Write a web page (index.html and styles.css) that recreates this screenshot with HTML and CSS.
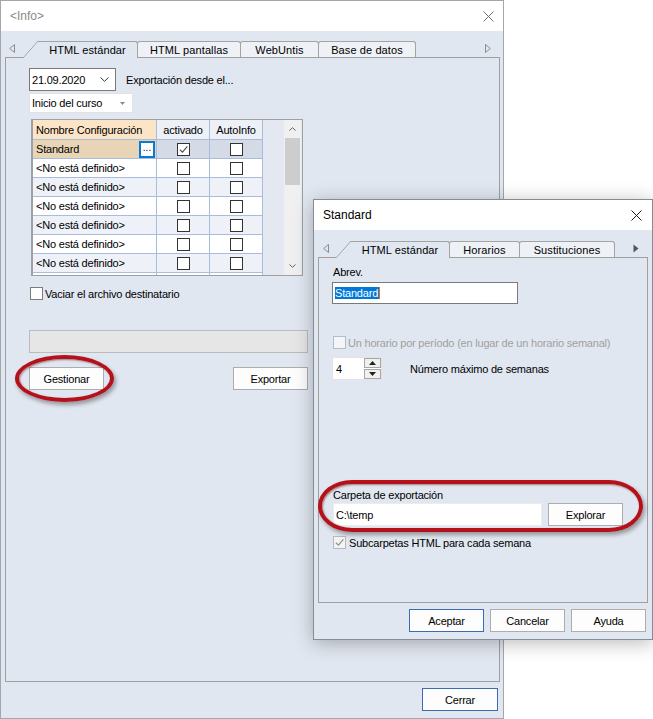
FILE: index.html
```html
<!DOCTYPE html>
<html lang="es">
<head>
    <meta charset="UTF-8">
    <title>Info</title>
    <link rel="stylesheet" href="styles.css">
</head>
<body>
    <!-- main window -->
    <div class="win main">
        <div class="titlebar">
            <span class="title">&lt;Info&gt;</span>
            <svg class="close" width="11" height="11" viewBox="0 0 11 11"><path d="M0.5 0.5 L10.5 10.5 M10.5 0.5 L0.5 10.5" stroke="#6f6f6f" stroke-width="1"/></svg>
        </div>
        <div class="tabstrip">
            <svg class="tab-arrow left" width="6" height="9" viewBox="0 0 6 9"><path d="M5.5 0.5 L0.7 4.5 L5.5 8.5 Z" fill="none" stroke="#8c8c8c"/></svg>
            <div class="tab active w-std">HTML estándar</div>
            <div class="tab w-pant">HTML pantallas</div>
            <div class="tab w-web">WebUntis</div>
            <div class="tab w-base">Base de datos</div>
            <svg class="tab-arrow right" width="6" height="9" viewBox="0 0 6 9"><path d="M0.5 0.5 L5.3 4.5 L0.5 8.5 Z" fill="none" stroke="#8c8c8c"/></svg>
        </div>
        <div class="panel">
            <div class="date-row">
                <div class="combo date">
                    <span>21.09.2020</span>
                    <svg width="9" height="5" viewBox="0 0 9 5"><path d="M0.5 0.5 L4.5 4.3 L8.5 0.5" fill="none" stroke="#3a3a3a"/></svg>
                </div>
                <span>Exportación desde el...</span>
            </div>
            <div class="combo flat">
                <span>Inicio del curso</span>
                <svg width="5" height="3" viewBox="0 0 5 3"><path d="M0 0 L5 0 L2.5 3 Z" fill="#8a8a8a"/></svg>
            </div>

            <div class="grid">
                <div class="grid-rows">
                    <div class="grow head">
                        <div class="cell name-head">Nombre Configuración</div>
                        <div class="cell mid">activado</div>
                        <div class="cell mid">AutoInfo</div>
                    </div>
                    <div class="grow current">
                        <div class="cell name-cur">Standard<span class="dots">...</span></div>
                        <div class="cell mid"><span class="cb"><svg width="11" height="11" viewBox="0 0 11 11"><path d="M1.8 5.6 L4.4 8.2 L9.4 2.4" fill="none" stroke="#4a4a4a" stroke-width="1.1"/></svg></span></div>
                        <div class="cell mid"><span class="cb"></span></div>
                    </div>
                    <div class="grow"><div class="cell">&lt;No está definido&gt;</div><div class="cell mid"><span class="cb"></span></div><div class="cell mid"><span class="cb"></span></div></div>
                    <div class="grow alt"><div class="cell">&lt;No está definido&gt;</div><div class="cell mid"><span class="cb"></span></div><div class="cell mid"><span class="cb"></span></div></div>
                    <div class="grow"><div class="cell">&lt;No está definido&gt;</div><div class="cell mid"><span class="cb"></span></div><div class="cell mid"><span class="cb"></span></div></div>
                    <div class="grow alt"><div class="cell">&lt;No está definido&gt;</div><div class="cell mid"><span class="cb"></span></div><div class="cell mid"><span class="cb"></span></div></div>
                    <div class="grow"><div class="cell">&lt;No está definido&gt;</div><div class="cell mid"><span class="cb"></span></div><div class="cell mid"><span class="cb"></span></div></div>
                    <div class="grow alt"><div class="cell">&lt;No está definido&gt;</div><div class="cell mid"><span class="cb"></span></div><div class="cell mid"><span class="cb"></span></div></div>
                    <!-- row cut by the grid edge, only its top shows -->
                    <div class="grow"><div class="cell"></div><div class="cell"></div><div class="cell"></div></div>
                </div>
                <div class="vscroll">
                    <div class="sb-btn"><svg width="7" height="4" viewBox="0 0 7 4"><path d="M0.5 3.5 L3.5 0.7 L6.5 3.5" fill="none" stroke="#606060"/></svg></div>
                    <div class="sb-thumb"></div>
                    <div class="sb-track"></div>
                    <div class="sb-btn"><svg width="7" height="4" viewBox="0 0 7 4"><path d="M0.5 0.5 L3.5 3.3 L6.5 0.5" fill="none" stroke="#606060"/></svg></div>
                </div>
            </div>

            <div class="check-row vaciar"><span class="cb gray"></span>Vaciar el archivo destinatario</div>
            <div class="progress"></div>
            <div class="btn-row">
                <button class="btn">Gestionar</button>
                <button class="btn">Exportar</button>
            </div>
        </div>
        <div class="footer">
            <button class="btn default w76">Cerrar</button>
        </div>
    </div>

    <!-- Standard dialog -->
    <div class="win dialog">
        <div class="titlebar">
            <span>Standard</span>
            <svg class="close" width="11" height="11" viewBox="0 0 11 11"><path d="M0.5 0.5 L10.5 10.5 M10.5 0.5 L0.5 10.5" stroke="#1a1a1a" stroke-width="1"/></svg>
        </div>
        <div class="tabstrip">
            <svg class="tab-arrow left" width="6" height="9" viewBox="0 0 6 9"><path d="M5.5 0.5 L0.7 4.5 L5.5 8.5 Z" fill="none" stroke="#8c8c8c"/></svg>
            <div class="tab active w-std2">HTML estándar</div>
            <div class="tab w-hor">Horarios</div>
            <div class="tab w-sus">Sustituciones</div>
            <svg class="tab-arrow right" width="6" height="9" viewBox="0 0 6 9"><path d="M0.5 0.5 L5.5 4.5 L0.5 8.5 Z" fill="#555"/></svg>
        </div>
        <div class="panel">
            <div class="lbl">Abrev.</div>
            <div class="field abrev"><span class="sel">Standard</span></div>

            <div class="check-row disabled"><span class="cb off"></span>Un horario por período (en lugar de un horario semanal)</div>

            <div class="spin-row">
                <div class="spin">
                    <span>4</span>
                    <div class="spin-btns">
                        <div class="spin-btn"><svg width="7" height="4" viewBox="0 0 7 4"><path d="M0 4 L7 4 L3.5 0 Z" fill="#222"/></svg></div>
                        <div class="spin-btn"><svg width="7" height="4" viewBox="0 0 7 4"><path d="M0 0 L7 0 L3.5 4 Z" fill="#222"/></svg></div>
                    </div>
                </div>
                <span>Número máximo de semanas</span>
            </div>

            <div class="lbl carpeta">Carpeta de exportación</div>
            <div class="folder-row">
                <div class="field folder">C:\temp</div>
                <button class="btn">Explorar</button>
            </div>
            <div class="check-row sub"><span class="cb dim"><svg width="11" height="11" viewBox="0 0 11 11"><path d="M1.8 5.6 L4.4 8.2 L9.4 2.4" fill="none" stroke="#8f8f8f" stroke-width="1.2"/></svg></span>Subcarpetas HTML para cada semana</div>
        </div>
        <div class="footer">
            <button class="btn default">Aceptar</button>
            <button class="btn">Cancelar</button>
            <button class="btn">Ayuda</button>
        </div>
    </div>

    <!-- red annotation marks -->
    <div class="mark mark-gest"></div>
    <div class="mark mark-folder"></div>
</body>
</html>
```

FILE: styles.css
```css
*{
    box-sizing: border-box;
}
body{
    margin: 0;
    width: 653px;
    height: 719px;
    overflow: hidden;
    position: relative;
    background: #fff;
    font-family: "Liberation Sans", Arial, sans-serif;
    font-size: 11px;
    letter-spacing: -0.2px;
    color: #000;
}

/* windows */
.win{
    background: #e1e7f0;
    border: 1px solid #a3a7ad;
    display: flex;
    flex-direction: column;
}
.main{
    width: 504px;
    height: 719px;
}
.dialog{
    position: absolute;
    left: 313px;
    top: 199px;
    width: 340px;
    height: 441px;
    border-color: #868c95;
    box-shadow: 0 3px 18px rgba(0, 0, 0, 0.28);
}
.titlebar{
    height: 30px;
    flex: none;
    background: #fff;
    display: flex;
    align-items: center;
    justify-content: space-between;
    padding: 0 9px;
    font-size: 12px;
    letter-spacing: 0;
}
.dialog .titlebar{
    padding: 0 10px 0 9px;
}
.title{
    color: #8a8a8a;
}

/* tabs */
.tabstrip{
    height: 26px;
    flex: none;
    display: flex;
    align-items: flex-end;
    padding-left: 8px;
}
.dialog .tabstrip{
    height: 27px;
    padding-left: 9px;
}
.tab-arrow{
    margin-bottom: 4px;
    flex: none;
}
.tab-arrow.left{
    margin-right: 8px;
}
.dialog .tab-arrow.left{
    margin-right: 7px;
}
.tab-arrow.right{
    margin-left: auto;
    margin-right: 12px;
}
.dialog .tab-arrow.right{
    margin-right: 13px;
}
.tab{
    height: 16px;
    border: 1px solid #a3a3a3;
    border-bottom: none;
    border-radius: 3px 3px 0 0;
    background: #eef1f6;
    display: flex;
    align-items: center;
    justify-content: center;
    margin-left: -1px;
    flex: none;
    letter-spacing: 0.1px;
}
.tab.active{
    position: relative;
    z-index: 1;
    height: 17px;
    margin-bottom: -1px;
    margin-left: 15px;
    border-left: none;
    border-top-left-radius: 0;
    background: #e1e7f0;
}
.tab.active::before{
    content: "";
    position: absolute;
    left: -15px;
    top: -1px;
    width: 15px;
    height: 17px;
    background: linear-gradient(to bottom right, transparent calc(50% - 0.7px), #a3a3a3 50%, #e1e7f0 calc(50% + 0.7px));
}
.w-std{ width: 100px; }
.w-pant{ width: 104px; }
.w-web{ width: 79px; }
.w-base{ width: 98px; }
.w-std2{ width: 99px; }
.w-hor{ width: 71px; }
.w-sus{ width: 96px; }

.panel{
    flex: none;
    height: 625px;
    margin: 0 3px 0 4px;
    border: 1px solid #a0a0a0;
    background: #e1e7f0;
    padding: 10px 0 0 23px;
}
.dialog .panel{
    height: 346px;
    margin: 0 4px;
    padding: 8px 0 0 13px;
}

/* main panel content */
.date-row{
    display: flex;
    align-items: center;
    gap: 10px;
}
.combo{
    background: #fff;
    display: flex;
    align-items: center;
    justify-content: space-between;
}
.combo.date{
    width: 87px;
    height: 23px;
    border: 1px solid #7a7a7a;
    padding: 0 6px 0 2px;
}
.combo.flat{
    margin-top: 2px;
    width: 104px;
    height: 20px;
    border: 1px solid #e2e2e2;
    padding: 0 7px 0 2px;
}

.grid{
    margin: 6px 0 0 2px;
    width: 272px;
    height: 157px;
    border: 1px solid #a0a0a0;
    border-left-width: 2px;
    background: #e4e9f1;
    display: flex;
    overflow: hidden;
}
.grid-rows{
    width: 230px;
    flex: none;
}
.grow{
    display: grid;
    grid-template-columns: 124px 53px 53px;
    height: 19px;
    background: #fff;
}
.grow.alt{
    background: #eef2f8;
}
.grow.head{
    height: 20px;
    background: #edf1f7;
}
.grow.current{
    background: #d4dbe6;
}
.cell{
    border-right: 1px solid #a9bcd9;
    border-bottom: 1px solid #a9bcd9;
    padding-left: 3px;
    display: flex;
    align-items: center;
    white-space: nowrap;
}
.cell.mid{
    justify-content: center;
    padding-left: 0;
}
.name-head{
    background: #fce5c6;
}
.name-cur{
    background: #e8d5b8;
    justify-content: space-between;
    padding-right: 1px;
}
.dots{
    width: 16px;
    height: 17px;
    border: 2px solid #0a78d4;
    background: #fff;
    font-size: 10px;
    line-height: 10px;
    text-align: center;
    letter-spacing: 0;
}
.cb{
    width: 13px;
    height: 13px;
    border: 1px solid #333;
    background: #fff;
    display: inline-flex;
    align-items: center;
    justify-content: center;
    flex: none;
}
.cb.gray{
    border-color: #7d7d7d;
}
.cb.off{
    border-color: #b4bdcc;
    background: #f3f5f9;
}
.cb.dim{
    border-color: #b9b9b9;
    background: #f3f3f3;
}

.vscroll{
    margin-left: auto;
    margin-right: 1px;
    width: 17px;
    background: #f0f0f0;
    display: flex;
    flex-direction: column;
}
.sb-btn{
    height: 18px;
    display: flex;
    align-items: center;
    justify-content: center;
    flex: none;
}
.sb-thumb{
    height: 47px;
    margin: 0 1px;
    background: #cdcdcd;
    flex: none;
}
.sb-track{
    flex: 1;
}

.check-row{
    display: flex;
    align-items: center;
    gap: 2px;
    height: 13px;
}
.vaciar{
    margin: 11px 0 0 1px;
}
.progress{
    margin-top: 30px;
    width: 279px;
    height: 23px;
    background: #e6e6e6;
    border: 1px solid #bcbcbc;
}
.btn-row{
    margin-top: 14px;
    width: 279px;
    display: flex;
    justify-content: space-between;
}
.btn{
    width: 75px;
    height: 23px;
    border: 1px solid #adadad;
    background: #fdfdfd;
    font-family: inherit;
    font-size: 11px;
    letter-spacing: -0.2px;
    color: #000;
    padding: 0;
}
.btn.default{
    border-color: #3d6bb3;
}
.w76{
    width: 76px;
}
.footer{
    flex: 1;
    display: flex;
    justify-content: flex-end;
    align-items: flex-start;
    gap: 6px;
    padding: 6px 5px 0 0;
}
.dialog .footer{
    padding-right: 6px;
}

/* dialog content */
.lbl{
    line-height: 13px;
    margin-left: 1px;
}
.field{
    background: #fff;
    height: 22px;
    display: flex;
    align-items: center;
}
.abrev{
    margin-top: 3px;
    width: 186px;
    border: 1px solid #7a7a7a;
    padding-left: 2px;
}
.sel{
    background: #0078d7;
    color: #fff;
    line-height: 12px;
    padding-right: 1px;
    border-right: 1px solid #e07020;
}
.disabled{
    margin: 32px 0 0 1px;
    color: #a0a0a0;
}
.spin-row{
    margin-top: 8px;
    display: flex;
    align-items: center;
    gap: 28px;
}
.spin{
    width: 50px;
    height: 23px;
    background: #fff;
    border: 1px solid #e3e3e3;
    display: flex;
    align-items: center;
    padding-left: 3px;
}
.spin-btns{
    margin-left: auto;
    width: 17px;
    height: 21px;
    display: flex;
    flex-direction: column;
    gap: 1px;
}
.spin-btn{
    flex: 1;
    border: 1px solid #a6a6a6;
    background: #f0f0f0;
    display: flex;
    align-items: center;
    justify-content: center;
}
.carpeta{
    margin-top: 109px;
}
.folder-row{
    margin: 1px 0 0 1px;
    display: flex;
    gap: 6px;
}
.folder{
    width: 209px;
    height: 23px;
    border: 1px solid #ececec;
    padding-left: 2px;
}
.sub{
    margin: 10px 0 0 1px;
    gap: 3px;
}

/* red annotation ellipses */
.mark{
    position: absolute;
    z-index: 5;
    border: 4px solid #b5111b;
    box-shadow: 2px 3px 4px rgba(0, 0, 0, 0.35), inset 1px 1px 2px rgba(80, 0, 0, 0.45);
}
.mark-gest{
    left: 15px;
    top: 355px;
    width: 99px;
    height: 47px;
    border-radius: 50%;
}
.mark-folder{
    left: 318px;
    top: 480px;
    width: 325px;
    height: 52px;
    border-radius: 34px / 26px;
}
```
